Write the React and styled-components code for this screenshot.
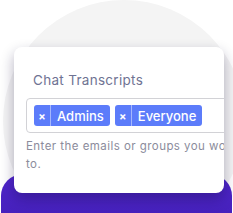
import styled, { createGlobalStyle } from "styled-components";

const GlobalStyle = createGlobalStyle`
  html, body {
    margin: 0;
    padding: 0;
    background: #ffffff;
  }
  body {
    font-family: "Inter", "Noto Sans", sans-serif;
  }
`;

const tags = ["Admins", "Everyone"];

export default function App() {
  return (
    <>
      <GlobalStyle />
      <Stage>
        <Circle />
        <PurpleBlock />
        <Card>
          <Title>Chat Transcripts</Title>
          <TagInput>
            {tags.map((tag) => (
              <Tag key={tag}>
                <TagRemove>×</TagRemove>
                <TagLabel>{tag}</TagLabel>
              </Tag>
            ))}
          </TagInput>
          <Helper>
            Enter the emails or groups you would like to send chat transcripts
            <br />
            to.
          </Helper>
        </Card>
      </Stage>
    </>
  );
}

const Stage = styled.div`
  position: relative;
  width: 233px;
  height: 213px;
  overflow: hidden;
  display: flex;
  align-items: flex-start;
`;

const Circle = styled.div`
  position: absolute;
  left: 3px;
  top: 0;
  width: 242px;
  height: 242px;
  border-radius: 50%;
  background: #f4f4f4;
`;

const PurpleBlock = styled.div`
  position: absolute;
  left: 1px;
  top: 174px;
  width: 231px;
  height: 80px;
  border-radius: 22px;
  background: linear-gradient(180deg, #5026cc 0%, #4621bc 50%, #3a1a9e 100%);
`;

const Card = styled.div`
  position: relative;
  z-index: 1;
  margin: 47px 0 0 14px;
  width: 210px;
  height: 146px;
  box-sizing: border-box;
  padding: 23px 0 0 12px;
  background: #ffffff;
  border-radius: 8px;
  overflow: hidden;
  box-shadow: 0 6px 14px rgba(20, 10, 60, 0.32);
`;

const Title = styled.div`
  margin-left: 7px;
  font-size: 13.5px;
  line-height: 20px;
  color: #6f7393;
  letter-spacing: 0.3px;
  white-space: nowrap;
`;

const TagInput = styled.div`
  margin-top: 8px;
  width: 260px;
  height: 35px;
  box-sizing: border-box;
  padding: 6px 7px;
  border: 1px solid #d2d2d6;
  border-radius: 4px;
  display: flex;
  gap: 5px;
`;

const Tag = styled.div`
  display: flex;
  height: 21px;
  background: #5c7cfa;
  border-radius: 3px;
  color: #ffffff;
`;

const TagRemove = styled.span`
  width: 16px;
  display: flex;
  align-items: center;
  justify-content: center;
  font-size: 11px;
  font-weight: 700;
  border-right: 1px solid rgba(255, 255, 255, 0.45);
`;

const TagLabel = styled.span`
  padding: 0 6px;
  display: flex;
  align-items: center;
  font-size: 13px;
  font-weight: 500;
`;

const Helper = styled.div`
  margin-top: 4px;
  font-size: 11.5px;
  line-height: 18px;
  color: #8b8c9c;
  letter-spacing: 0.45px;
  white-space: nowrap;
`;
